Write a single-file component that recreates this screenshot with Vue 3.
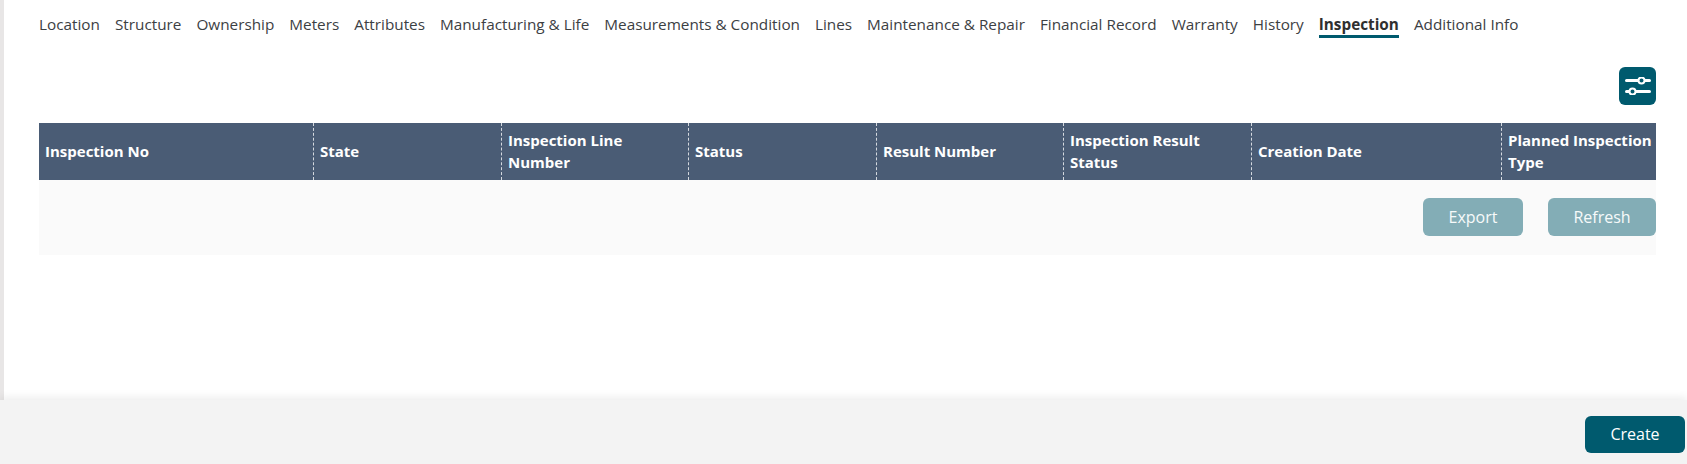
<template>
  <div class="page">
    <main class="content">
      <nav class="tabs">
        <a v-for="tab in tabs" :key="tab" class="tab" :class="{ active: tab === activeTab }">{{ tab }}</a>
      </nav>

      <div class="toolbar">
        <button class="settings" type="button" aria-label="Table settings">
          <svg width="26" height="18" viewBox="0 0 26 18" fill="none">
            <path d="M1.5 3.5h23M1.5 14.5h23" stroke="#fff" stroke-width="3" stroke-linecap="round" />
            <circle cx="16.5" cy="3.5" r="3" fill="#005a6e" stroke="#fff" stroke-width="2" />
            <circle cx="7.5" cy="14.5" r="3" fill="#005a6e" stroke="#fff" stroke-width="2" />
          </svg>
        </button>
      </div>

      <section class="table">
        <div class="table-head">
          <div v-for="col in columns" :key="col" class="cell">{{ col }}</div>
        </div>
        <div class="table-foot">
          <button class="btn-muted export" type="button">Export</button>
          <button class="btn-muted refresh" type="button">Refresh</button>
        </div>
      </section>
    </main>

    <footer class="footer">
      <button class="create" type="button">Create</button>
    </footer>
  </div>
</template>

<script setup>
const activeTab = 'Inspection'

const tabs = [
  'Location',
  'Structure',
  'Ownership',
  'Meters',
  'Attributes',
  'Manufacturing & Life',
  'Measurements & Condition',
  'Lines',
  'Maintenance & Repair',
  'Financial Record',
  'Warranty',
  'History',
  'Inspection',
  'Additional Info'
]

const columns = [
  'Inspection No',
  'State',
  'Inspection Line Number',
  'Status',
  'Result Number',
  'Inspection Result Status',
  'Creation Date',
  'Planned Inspection Type'
]
</script>

<style>
html,
body {
  margin: 0;
  background: #fff;
}
</style>

<style scoped>
.page {
  display: flex;
  flex-direction: column;
  height: 464px;
  overflow: hidden;
  font-family: "Open Sans", "Noto Sans", sans-serif;
}

.content {
  flex: 1;
  box-sizing: border-box;
  border-left: 4px solid #e8e6e6;
  padding: 16px 31px 0 35px;
}

.tabs {
  display: flex;
  gap: 15px;
  height: 22px;
}

.tab {
  box-sizing: border-box;
  height: 22px;
  font-size: 15.3px;
  line-height: 16px;
  color: #3c4043;
  white-space: nowrap;
}

.tab.active {
  font-weight: 700;
  color: #2f2f2f;
  border-bottom: 3px solid #005a6e;
}

.toolbar {
  display: flex;
  justify-content: flex-end;
  margin-top: 29px;
}

.settings {
  display: flex;
  align-items: center;
  justify-content: center;
  width: 37px;
  height: 38px;
  padding: 0;
  border: 0;
  border-radius: 6px;
  background: #005a6e;
}

.table {
  margin-top: 18px;
}

.table-head {
  display: grid;
  grid-template-columns: 274px 188px 187px 188px 187px 188px 250px 155px;
  height: 57px;
  background: #4a5c75;
}

.cell {
  box-sizing: border-box;
  display: flex;
  align-items: center;
  padding: 0 6px 1px;
  font-size: 15px;
  font-weight: 700;
  line-height: 22px;
  color: #fff;
  border-left: 1px dashed #d5d9df;
}

.cell:first-child {
  border-left: 0;
}

.cell:last-child {
  padding-right: 0;
}

.table-foot {
  display: flex;
  justify-content: flex-end;
  gap: 25px;
  box-sizing: border-box;
  height: 75px;
  padding-top: 18px;
  background: #fafafa;
}

.btn-muted {
  height: 38px;
  padding: 0;
  border: 0;
  border-radius: 6px;
  background: #83adb6;
  color: #f7fafa;
  font-family: inherit;
  font-size: 16px;
}

.export {
  width: 100px;
}

.refresh {
  width: 108px;
}

.footer {
  display: flex;
  justify-content: flex-end;
  align-items: flex-start;
  box-sizing: border-box;
  height: 64px;
  padding: 16px 2px 0 0;
  background: #f3f3f3;
  box-shadow: 0 -3px 8px rgba(0, 0, 0, 0.07);
}

.create {
  width: 100px;
  height: 37px;
  padding: 0 0 2px;
  border: 0;
  border-radius: 6px;
  background: #005a6e;
  color: #fff;
  font-family: inherit;
  font-size: 16px;
}
</style>
